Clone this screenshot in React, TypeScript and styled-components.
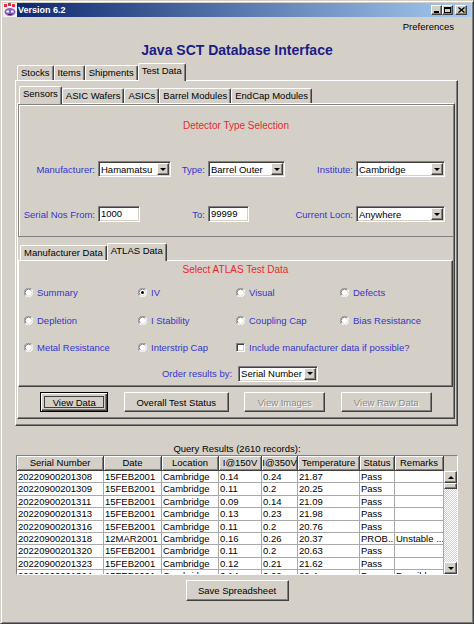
import React from "react";
import styled, { createGlobalStyle, css } from "styled-components";

const FONT = `"Liberation Sans", Arial, sans-serif`;

const GlobalStyle = createGlobalStyle`
  html, body { margin: 0; padding: 0; background: #d4d0c8; }
  body { font-family: ${FONT}; font-size: 9.5px; color: #000; }
  *, *::before, *::after { box-sizing: border-box; }
`;

const raised = css`
  border: 1px solid;
  border-color: #ffffff #404040 #404040 #ffffff;
  box-shadow: inset -1px -1px #808080;
`;

const sunken = css`
  border: 1px solid;
  border-color: #808080 #ffffff #ffffff #808080;
  box-shadow: inset 1px 1px #404040, inset -1px -1px #d4d0c8;
`;

const Window = styled.div`
  width: 474px;
  height: 624px;
  padding: 2px;
  background: #d4d0c8;
  border: 1px solid;
  border-color: #d4d0c8 #404040 #404040 #d4d0c8;
  box-shadow: inset 1px 1px #ffffff, inset -1px -1px #808080;
  display: flex;
  flex-direction: column;
  overflow: hidden;
`;

const TitleBar = styled.div`
  flex: none;
  height: 14px;
  display: flex;
  align-items: center;
  background: linear-gradient(to right, #0a246a, #a6caf0);
  padding-right: 4px;
`;

const TitleText = styled.span`
  margin-left: 1px;
  color: #fff;
  font: bold 9px ${FONT};
  white-space: nowrap;
`;

const WinButtons = styled.div`
  margin-left: auto;
  display: flex;
  align-items: center;
`;

const WinButton = styled.span<{ $gap?: number; $w?: number }>`
  ${raised};
  width: ${(p) => p.$w ?? 11}px;
  height: 10px;
  margin-left: ${(p) => p.$gap ?? 0}px;
  background: #d4d0c8;
  display: flex;
  align-items: center;
  justify-content: center;
`;

const MenuBar = styled.div`
  flex: none;
  height: 18px;
  display: flex;
  align-items: center;
  justify-content: flex-end;
  padding-right: 17px;
`;

const Heading = styled.h1`
  flex: none;
  margin: 0;
  height: 28px;
  padding-top: 7px;
  line-height: 16px;
  text-align: center;
  font: bold 14px ${FONT};
  color: #1c1c84;
`;

const TabPane = styled.div<{ $ml?: number; $w: number; $mt?: number }>`
  flex: none;
  width: ${(p) => p.$w}px;
  margin-left: ${(p) => p.$ml ?? 0}px;
  margin-top: ${(p) => p.$mt ?? 0}px;
  display: flex;
  flex-direction: column;
`;

const TabStrip = styled.div`
  flex: none;
  height: 17px;
  display: flex;
  align-items: flex-end;
  padding-left: 2px;
  position: relative;
  z-index: 1;
`;

const Tab = styled.div<{ $active?: boolean }>`
  height: ${(p) => (p.$active ? 18 : 15)}px;
  margin-bottom: ${(p) => (p.$active ? -1 : 0)}px;
  padding: 1px 3px 0;
  line-height: 12px;
  background: #d4d0c8;
  border-top: 1px solid #fff;
  border-left: 1px solid #fff;
  border-right: 1px solid #404040;
  box-shadow: inset -1px 0 #808080;
  border-radius: 2px 2px 0 0;
  white-space: nowrap;
`;

const TabPanel = styled.div<{ $h: number; $pad?: string }>`
  height: ${(p) => p.$h}px;
  padding: ${(p) => p.$pad ?? "0"};
  border-top: 1px solid #fff;
  border-left: 1px solid #fff;
  border-right: 1px solid #404040;
  border-bottom: 1px solid #404040;
  box-shadow: inset -1px -1px #808080;
  display: flex;
  flex-direction: column;
`;

const GroupBox = styled.div`
  flex: none;
  height: 133px;
  padding-top: 15px;
  border: 1px solid #808080;
  box-shadow: inset 1px 1px #ffffff;
  display: flex;
  flex-direction: column;
`;

const SectionTitle = styled.div`
  line-height: 12px;
  text-align: center;
  color: #e8282f;
  font-size: 10px;
`;

const FormGrid = styled.div`
  margin-top: 29px;
  display: grid;
  grid-template-columns: 79px 73px 37px 77px 71px 89px;
  grid-auto-rows: 16px;
  row-gap: 29px;
  align-items: center;
`;

const FieldLabel = styled.span`
  color: #3535cc;
  text-align: right;
  padding-right: 3px;
  white-space: nowrap;
`;

const Combo = styled.div<{ $w?: number }>`
  ${sunken};
  width: ${(p) => (p.$w ? `${p.$w}px` : "100%")};
  height: 16px;
  background: #fff;
  display: flex;
  align-items: center;
`;

const ComboText = styled.span`
  flex: 1;
  padding-left: 2px;
  white-space: nowrap;
  overflow: hidden;
`;

const ComboButton = styled.span`
  ${raised};
  flex: none;
  width: 12px;
  height: 12px;
  margin-right: 1px;
  background: #d4d0c8;
  display: flex;
  align-items: center;
  justify-content: center;
`;

const DownTriangle = styled.span`
  width: 0;
  height: 0;
  border-left: 3px solid transparent;
  border-right: 3px solid transparent;
  border-top: 3px solid #000;
`;

const UpTriangle = styled.span`
  width: 0;
  height: 0;
  border-left: 3px solid transparent;
  border-right: 3px solid transparent;
  border-bottom: 3px solid #000;
`;

const TextField = styled.div<{ $w: number }>`
  ${sunken};
  width: ${(p) => p.$w}px;
  height: 16px;
  background: #fff;
  padding-left: 2px;
  line-height: 14px;
`;

const RadioGrid = styled.div`
  margin-top: 3px;
  padding-left: 5px;
  display: grid;
  grid-template-columns: 114px 98px 104px 1fr;
  grid-auto-rows: 27.5px;
  align-items: center;
`;

const Option = styled.label`
  display: flex;
  align-items: center;
  gap: 4px;
  color: #3535cc;
  white-space: nowrap;
`;

const CheckBox = styled.span`
  ${sunken};
  width: 9px;
  height: 9px;
  background: #fff;
  flex: none;
`;

const OrderRow = styled.div`
  margin-top: 4px;
  padding-left: 9px;
  display: flex;
  align-items: center;
  justify-content: center;
  gap: 6px;
`;

const ButtonRow = styled.div`
  margin-top: 5px;
  display: flex;
  justify-content: center;
  gap: 15.5px;
`;

const Button = styled.button<{ $w: number; $h?: number; $default?: boolean }>`
  ${raised};
  position: relative;
  width: ${(p) => p.$w}px;
  height: ${(p) => p.$h ?? 20}px;
  padding: 0;
  background: #d4d0c8;
  font: 9.5px ${FONT};
  color: #000;
  ${(p) =>
    p.$default &&
    css`
      border: 1px solid #000;
      box-shadow: inset 1px 1px #fff, inset -1px -1px #404040, inset -2px -2px #808080;
      &::after {
        content: "";
        position: absolute;
        inset: 3px;
        border: 1px solid #404040;
      }
    `}
  &:disabled {
    color: #8c8a86;
    text-shadow: 1px 1px #ffffff;
  }
`;

const Caption = styled.div`
  flex: none;
  margin-top: 17px;
  line-height: 12px;
  text-align: center;
`;

const ScrollPane = styled.div`
  flex: none;
  margin-left: 13px;
  width: 442px;
  height: 120px;
  border: 1px solid;
  border-color: #808080 #ffffff #ffffff #808080;
  display: flex;
  overflow: hidden;
`;

const TableArea = styled.div`
  width: 427px;
  display: flex;
  flex-direction: column;
  overflow: hidden;
`;

const COLS = "87px 58px 57px 43px 36px 62px 35px 49px";

const HeaderRow = styled.div`
  flex: none;
  height: 15px;
  display: grid;
  grid-template-columns: ${COLS};
`;

const HeaderCell = styled.div`
  border-right: 1px solid #404040;
  border-bottom: 1px solid #404040;
  box-shadow: inset 1px 1px #fff, inset -1px -1px #808080;
  text-align: center;
  line-height: 13px;
  white-space: nowrap;
  overflow: hidden;
  background: #d4d0c8;
`;

const Body = styled.div`
  flex: 1;
  background: #fff;
  overflow: hidden;
`;

const Row = styled.div`
  height: 12.4px;
  display: grid;
  grid-template-columns: ${COLS};
`;

const Cell = styled.div`
  border-right: 1px solid #a9a9a9;
  border-bottom: 1px solid #a9a9a9;
  padding-left: 1px;
  line-height: 11.4px;
  white-space: nowrap;
  overflow: hidden;
`;

const ScrollBar = styled.div`
  width: 13px;
  display: flex;
  flex-direction: column;
`;

const Corner = styled.div`
  flex: none;
  height: 15px;
  background: #d4d0c8;
`;

const Track = styled.div`
  flex: 1;
  display: flex;
  flex-direction: column;
  background: repeating-conic-gradient(#ffffff 0 25%, #d4d0c8 0 50%) 0 0 / 2px 2px;
`;

const Arrow = styled.div`
  ${raised};
  flex: none;
  height: 12px;
  background: #d4d0c8;
  display: flex;
  align-items: center;
  justify-content: center;
`;

const Thumb = styled.div`
  ${raised};
  flex: none;
  height: 6px;
  background: #d4d0c8;
`;

const Gap = styled.div`
  flex: 1;
`;

const SaveRow = styled.div`
  flex: none;
  margin-top: 5px;
  display: flex;
  justify-content: center;
`;

const Radio = ({ checked }: { checked?: boolean }) => (
  <svg width="9" height="9" viewBox="0 0 12 12" style={{ flex: "none" }}>
    <circle cx="6" cy="6" r="5.5" fill="#fff" />
    <path d="M10.24 1.76 A6 6 0 0 0 1.76 10.24" fill="none" stroke="#808080" strokeWidth="1" />
    <path d="M9.2 2.8 A4.5 4.5 0 0 0 2.8 9.2" fill="none" stroke="#404040" strokeWidth="1" />
    <path d="M1.76 10.24 A6 6 0 0 0 10.24 1.76" fill="none" stroke="#ffffff" strokeWidth="1" />
    <path d="M2.8 9.2 A4.5 4.5 0 0 0 9.2 2.8" fill="none" stroke="#d4d0c8" strokeWidth="1" />
    {checked && <circle cx="6" cy="6" r="2" fill="#000" />}
  </svg>
);

const AppIcon = () => (
  <svg width="14" height="14" viewBox="0 0 14 14" style={{ marginLeft: 0, flex: "none" }}>
    <rect x="0" y="0" width="14" height="14" fill="#f4f0f4" />
    <rect x="1" y="1" width="3" height="3" fill="#e03040" />
    <rect x="5" y="0" width="3" height="3" fill="#e03040" />
    <rect x="9" y="1" width="3" height="3" fill="#e03040" />
    <ellipse cx="7" cy="9" rx="5.5" ry="4" fill="#8a5cc8" />
    <rect x="3.5" y="7.5" width="2.5" height="2" fill="#fff" />
    <rect x="8" y="7.5" width="2.5" height="2" fill="#fff" />
    <rect x="5" y="11" width="4" height="1" fill="#402060" />
  </svg>
);

const Combobox = ({ value, w }: { value: string; w?: number }) => (
  <Combo $w={w}>
    <ComboText>{value}</ComboText>
    <ComboButton>
      <DownTriangle />
    </ComboButton>
  </Combo>
);

const rows: string[][] = [
  ["20220900201308", "15FEB2001", "Cambridge", "0.14", "0.24", "21.87", "Pass", ""],
  ["20220900201309", "15FEB2001", "Cambridge", "0.11", "0.2", "20.25", "Pass", ""],
  ["20220900201311", "15FEB2001", "Cambridge", "0.09", "0.14", "21.09", "Pass", ""],
  ["20220900201313", "15FEB2001", "Cambridge", "0.13", "0.23", "21.98", "Pass", ""],
  ["20220900201316", "15FEB2001", "Cambridge", "0.11", "0.2", "20.76", "Pass", ""],
  ["20220900201318", "12MAR2001", "Cambridge", "0.16", "0.26", "20.37", "PROB...", "Unstable ..."],
  ["20220900201320", "15FEB2001", "Cambridge", "0.11", "0.2", "20.63", "Pass", ""],
  ["20220900201323", "15FEB2001", "Cambridge", "0.12", "0.21", "21.62", "Pass", ""],
  ["20220900201324", "15FEB2001", "Cambridge", "0.14", "0.22", "20.4", "Pass", "Possible ..."],
];

const headers = ["Serial Number", "Date", "Location", "I@150V", "I@350V", "Temperature", "Status", "Remarks"];

export default function App() {
  return (
    <>
      <GlobalStyle />
      <Window>
        <TitleBar>
          <AppIcon />
          <TitleText>Version 6.2</TitleText>
          <WinButtons>
            <WinButton>
              <svg width="7" height="6" viewBox="0 0 7 6">
                <rect x="1" y="4" width="5" height="2" fill="#000" />
              </svg>
            </WinButton>
            <WinButton>
              <svg width="7" height="6" viewBox="0 0 7 6">
                <rect x="0.5" y="0.5" width="6" height="5" fill="none" stroke="#000" />
                <rect x="0" y="0" width="7" height="2" fill="#000" />
              </svg>
            </WinButton>
            <WinButton $gap={2} $w={12}>
              <svg width="7" height="6" viewBox="0 0 7 6">
                <path d="M0.5 0.5 L6.5 5.5 M6.5 0.5 L0.5 5.5" stroke="#000" strokeWidth="1.4" />
              </svg>
            </WinButton>
          </WinButtons>
        </TitleBar>

        <MenuBar>Preferences</MenuBar>

        <Heading>Java SCT Database Interface</Heading>

        <TabPane $ml={12} $w={443}>
          <TabStrip>
            <Tab>Stocks</Tab>
            <Tab>Items</Tab>
            <Tab>Shipments</Tab>
            <Tab $active>Test Data</Tab>
          </TabStrip>
          <TabPanel $h={346} $pad="5px 2px 0 1px">
            <TabPane $w={438}>
              <TabStrip>
                <Tab $active>Sensors</Tab>
                <Tab>ASIC Wafers</Tab>
                <Tab>ASICs</Tab>
                <Tab>Barrel Modules</Tab>
                <Tab>EndCap Modules</Tab>
              </TabStrip>
              <TabPanel $h={316}>
                <GroupBox>
                  <SectionTitle>Detector Type Selection</SectionTitle>
                  <FormGrid>
                    <FieldLabel>Manufacturer:</FieldLabel>
                    <Combobox value="Hamamatsu" />
                    <FieldLabel>Type:</FieldLabel>
                    <Combobox value="Barrel Outer" />
                    <FieldLabel>Institute:</FieldLabel>
                    <Combobox value="Cambridge" />

                    <FieldLabel>Serial Nos From:</FieldLabel>
                    <TextField $w={42}>1000</TextField>
                    <FieldLabel>To:</FieldLabel>
                    <TextField $w={41}>99999</TextField>
                    <FieldLabel>Current Locn:</FieldLabel>
                    <Combobox value="Anywhere" />
                  </FormGrid>
                </GroupBox>

                <TabPane $w={435} $mt={6}>
                  <TabStrip>
                    <Tab>Manufacturer Data</Tab>
                    <Tab $active>ATLAS Data</Tab>
                  </TabStrip>
                  <TabPanel $h={127} $pad="3px 0 0 0">
                    <SectionTitle>Select ATLAS Test Data</SectionTitle>
                    <RadioGrid>
                      <Option><Radio />Summary</Option>
                      <Option><Radio checked />IV</Option>
                      <Option><Radio />Visual</Option>
                      <Option><Radio />Defects</Option>
                      <Option><Radio />Depletion</Option>
                      <Option><Radio />I Stability</Option>
                      <Option><Radio />Coupling Cap</Option>
                      <Option><Radio />Bias Resistance</Option>
                      <Option><Radio />Metal Resistance</Option>
                      <Option><Radio />Interstrip Cap</Option>
                      <Option style={{ gridColumn: "3 / 5" }}>
                        <CheckBox />Include manufacturer data if possible?
                      </Option>
                    </RadioGrid>
                    <OrderRow>
                      <FieldLabel as="span" style={{ paddingRight: 0 }}>Order results by:</FieldLabel>
                      <Combobox value="Serial Number" w={80} />
                    </OrderRow>
                  </TabPanel>
                </TabPane>

                <ButtonRow>
                  <Button $w={68} $default>View Data</Button>
                  <Button $w={105}>Overall Test Status</Button>
                  <Button $w={81} disabled>View Images</Button>
                  <Button $w={91} disabled>View Raw Data</Button>
                </ButtonRow>
              </TabPanel>
            </TabPane>
          </TabPanel>
        </TabPane>

        <Caption>Query Results (2610 records):</Caption>

        <ScrollPane>
          <TableArea>
            <HeaderRow>
              {headers.map((h) => (
                <HeaderCell key={h}>{h}</HeaderCell>
              ))}
            </HeaderRow>
            <Body>
              {rows.map((r, i) => (
                <Row key={i}>
                  {r.map((c, j) => (
                    <Cell key={j}>{c}</Cell>
                  ))}
                </Row>
              ))}
            </Body>
          </TableArea>
          <ScrollBar>
            <Corner />
            <Track>
              <Arrow>
                <UpTriangle />
              </Arrow>
              <Thumb />
              <Gap />
              <Arrow>
                <DownTriangle />
              </Arrow>
            </Track>
          </ScrollBar>
        </ScrollPane>

        <SaveRow>
          <Button $w={103} $h={21}>Save Spreadsheet</Button>
        </SaveRow>
      </Window>
    </>
  );
}
